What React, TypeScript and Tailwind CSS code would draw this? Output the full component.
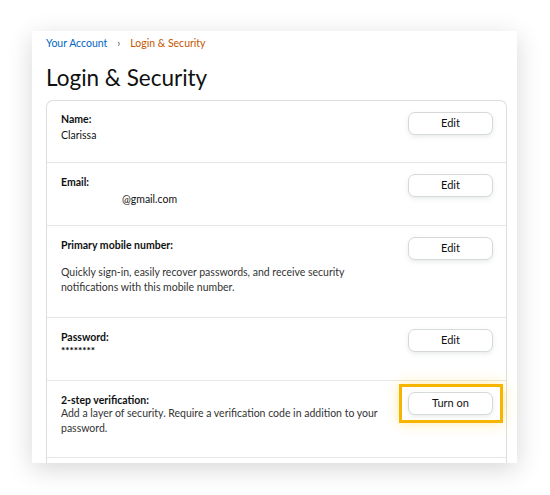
import React from 'react'

const font = { fontFamily: 'Lato, "Noto Sans", Arial, sans-serif' }

function EditButton({ label = 'Edit' }: { label?: string }) {
  return (
    <button className="block h-[23px] w-[85px] shrink-0 rounded-[7px] border border-[#d5d9d9] bg-white text-[11px] text-[#0f1111] shadow-[0_2px_4px_rgba(213,217,217,0.5)]">
      {label}
    </button>
  )
}

function Row({
  children,
  button,
  className = '',
}: {
  children: React.ReactNode
  button: React.ReactNode
  className?: string
}) {
  return (
    <div className={`flex items-start justify-between border-b border-[#e7e7e7] pl-[14px] pr-[13px] ${className}`}>
      <div className="text-[10.5px] leading-[16px] text-[#0f1111]">{children}</div>
      {button}
    </div>
  )
}

export default function App() {
  return (
    <div className="min-h-[495px] bg-white pl-[32px] pt-[31px]" style={font}>
      <div className="h-[432px] w-[485px] overflow-hidden bg-white pl-[14px] pr-[10px] shadow-[0_6px_24px_rgba(0,0,0,0.16)]">
        {/* breadcrumb */}
        <div className="flex items-center pt-[4px] text-[10.5px] leading-[16px]">
          <span className="text-[#0066c0]">Your Account</span>
          <span className="mx-[10px] text-[#555]">›</span>
          <span className="text-[#c45500]">Login &amp; Security</span>
        </div>
        <h1 className="mt-[13px] text-[22.5px] leading-[28px] text-[#0f1111]">Login &amp; Security</h1>

        <div className="mt-[8px] rounded-t-[7px] border border-b-0 border-[#dddddd]">
          <Row className="h-[62px] pt-[10px]" button={<div className="mt-[1px]"><EditButton /></div>}>
            <div className="font-bold">Name:</div>
            <div>Clarissa</div>
          </Row>
          <Row className="h-[63px] pt-[11px]" button={<EditButton />}>
            <div className="font-bold">Email:</div>
            <div className="pl-[61px] pt-[1px]">@gmail.com</div>
          </Row>
          <Row className="h-[92px] pt-[11px]" button={<EditButton />}>
            <div className="font-bold">Primary mobile number:</div>
            <div className="mt-[12px] w-[300px] leading-[15px] text-[#333]">
              Quickly sign-in, easily recover passwords, and receive security notifications with this mobile number.
            </div>
          </Row>
          <Row className="h-[63px] pt-[11px]" button={<EditButton />}>
            <div className="font-bold">Password:</div>
            <div className="text-[10px] font-black leading-[10px]">********</div>
          </Row>
          <Row
            className="h-[77px] pt-[11px]"
            button={
              <div className="relative h-[23px]">
                <span className="absolute -bottom-[8px] -left-[9px] -right-[10px] -top-[8px] border-[3px] border-[#f7b500] shadow-[0_0_14px_rgba(255,196,0,0.35)]" />
                <EditButton label="Turn on" />
              </div>
            }
          >
            <div className="font-bold">2-step verification:</div>
            <div className="-mt-[2px] w-[330px] leading-[15px] text-[#333]">
              Add a layer of security. Require a verification code in addition to your password.
            </div>
          </Row>
          <div className="h-[40px]" />
        </div>
      </div>
    </div>
  )
}
